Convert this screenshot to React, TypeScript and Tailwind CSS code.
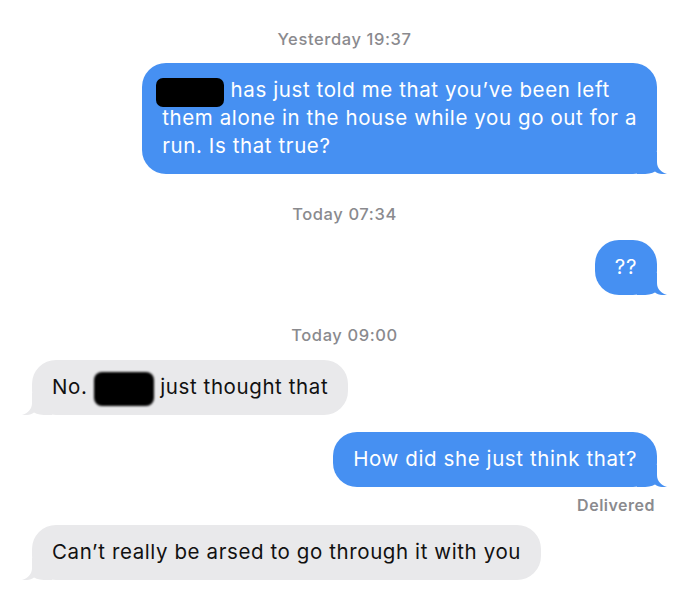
import React from "react";

const BLUE = "#4690f2";
const GRAY = "#e9e9eb";

function TailRight({ color }: { color: string }) {
  return (
    <svg className="absolute right-[-10px] bottom-0" width="30" height="22" viewBox="0 0 30 22">
      <path d="M0 0 H20 V10 C20 16 24 20 30 22 C25 22.6 21 21.4 18 19.4 C15 21.2 10 22 4 22 H0 Z" fill={color} />
    </svg>
  );
}

function TailLeft({ color }: { color: string }) {
  return (
    <svg className="absolute left-[-10px] bottom-0" width="30" height="22" viewBox="0 0 30 22">
      <path d="M30 0 H10 V10 C10 16 6 20 0 22 C5 22.6 9 21.4 12 19.4 C15 21.2 20 22 26 22 H30 Z" fill={color} />
    </svg>
  );
}

function Stamp({ day, time }: { day: string; time: string }) {
  return (
    <div className="text-center text-[16.5px] leading-[20px] font-medium tracking-[0.6px] text-[#8a8a8e]">
      {day} {time}
    </div>
  );
}

function Sent({ children }: { children: React.ReactNode }) {
  return (
    <div className="flex justify-end">
      <div
        className="relative rounded-[24px] pl-[20px] pr-[20px] pt-[13px] pb-[14px] text-[20.5px] leading-[28px] text-white tracking-[0.6px]"
        style={{ backgroundColor: BLUE }}
      >
        <span className="relative">{children}</span>
        <TailRight color={BLUE} />
      </div>
    </div>
  );
}

function Received({ children }: { children: React.ReactNode }) {
  return (
    <div className="flex justify-start">
      <div
        className="relative rounded-[24px] pl-[20px] pr-[20px] pt-[13px] pb-[14px] text-[20.5px] leading-[28px] text-[#111] tracking-[0.6px]"
        style={{ backgroundColor: GRAY }}
      >
        <span className="relative z-10">{children}</span>
        <TailLeft color={GRAY} />
      </div>
    </div>
  );
}

export default function App() {
  return (
    <div className="w-[690px] h-[600px] bg-white overflow-hidden pl-[32px] pr-[33px] pt-[29px] flex flex-col font-['Inter','Noto_Sans',sans-serif]">
      <Stamp day="Yesterday" time="19:37" />
      <div className="h-[14px]" />
      <Sent>
        <span className="inline-block align-top w-[68px] h-[29px] mt-[2px] -mb-[3px] -ml-[6px] bg-black rounded-[7px] blur-[0.7px]" />{" "}
        has just told me that you’ve been left
        <br />
        them alone in the house while you go out for a
        <br />
        run. Is that true?
      </Sent>
      <div className="h-[30px]" />
      <Stamp day="Today" time="07:34" />
      <div className="h-[16px]" />
      <Sent>??</Sent>
      <div className="h-[30px]" />
      <Stamp day="Today" time="09:00" />
      <div className="h-[15px]" />
      <Received>
        No.{" "}
        <span className="inline-block align-top w-[60px] h-[34px] -mt-[1px] -mb-[5px] bg-black rounded-[8px] blur-[0.8px]" />{" "}
        just thought that
      </Received>
      <div className="h-[17px]" />
      <Sent>How did she just think that?</Sent>
      <div className="h-[8px]" />
      <div className="text-right text-[16px] leading-[20px] font-semibold tracking-[0.5px] text-[#8a8a8e] pr-[2px]">Delivered</div>
      <div className="h-[10px]" />
      <Received>Can’t really be arsed to go through it with you</Received>
    </div>
  );
}
